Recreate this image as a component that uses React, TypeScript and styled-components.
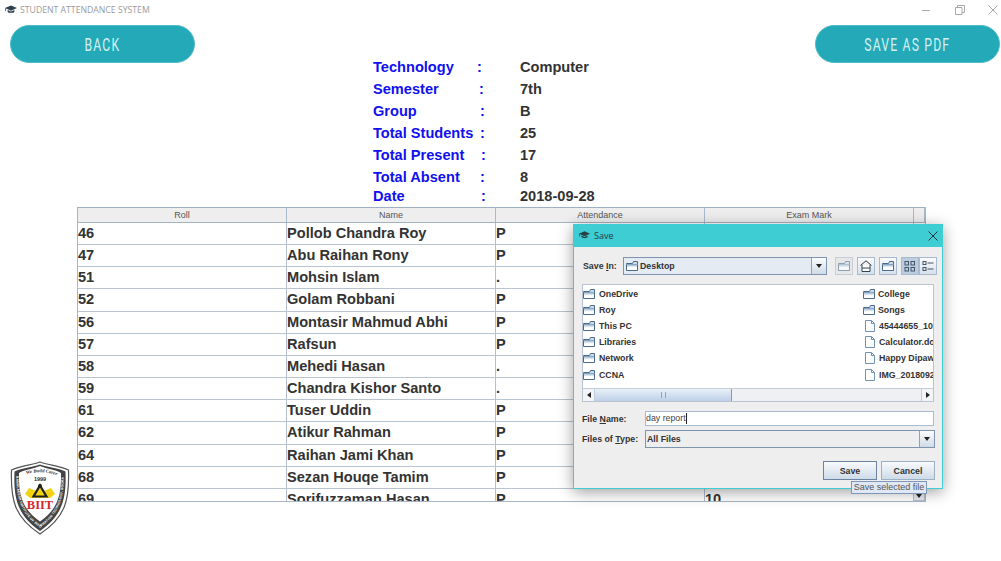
import React from "react";
import styled, { createGlobalStyle } from "styled-components";

const Global = createGlobalStyle`
  html, body { margin: 0; padding: 0; background: #fff; overflow: hidden; }
  body { width: 1001px; height: 561px; font-family: "Liberation Sans", Arial, sans-serif; }
`;

const Page = styled.div`
  position: relative;
  width: 1001px;
  height: 561px;
  overflow: hidden;
  background: #fff;
`;

const TitleBar = styled.header`
  height: 19px;
  display: flex;
  align-items: center;
  padding-left: 5px;
  gap: 3px;
`;
const TitleText = styled.span`
  font: 400 8.7px "Open Sans", sans-serif;
  color: #9a9a9e;
  flex: 1;
`;
const WinGroup = styled.div`
  display: flex;
  gap: 17.5px;
  color: #a8a8a8;
`;
const WinButton = styled.span`
  width: 16px;
  height: 19px;
  display: flex;
  align-items: center;
  justify-content: center;
`;

const TopSection = styled.div`
  height: 182px;
  display: flex;
  align-items: flex-start;
  padding: 6px 1px 0 10px;
`;
const PillButton = styled.button`
  width: 185px;
  height: 38px;
  flex: none;
  border: 1px solid #4fbdc8;
  border-radius: 19px;
  background: #23a9b7;
  color: #d5f0f2;
  font: 400 18px "Roboto", sans-serif;
  letter-spacing: 1.7px;
  padding: 0;
  white-space: nowrap;
`;
const PillLabel = styled.span`
  display: inline-block;
  transform: scaleX(0.68);
`;

const InfoGrid = styled.div`
  flex: 1;
  padding: 31px 0 0 178px;
`;
const InfoRow = styled.div<{ $h: number }>`
  display: grid;
  grid-template-columns: 104px 43px auto;
  height: ${(p) => p.$h}px;
  align-items: center;
  font: 700 14.6px "Liberation Sans", sans-serif;
`;
const InfoLabel = styled.span`
  color: #1010f0;
`;
const InfoColon = styled.span<{ $shift: number }>`
  color: #1010f0;
  padding-left: ${(p) => p.$shift}px;
`;
const InfoValue = styled.span`
  color: #333;
`;

const TableSection = styled.div`
  display: flex;
  height: 328px;
`;
const Gutter = styled.div`
  width: 77px;
  flex: none;
  display: flex;
  align-items: flex-end;
  padding-left: 10px;
  box-sizing: border-box;
`;
const Table = styled.div`
  width: 849px;
  height: 295px;
  box-sizing: border-box;
  border: 1px solid #a9b5c4;
  border-top: 1px solid #9fb0c3;
  overflow: hidden;
  position: relative;
`;
const HeadRow = styled.div`
  display: grid;
  grid-template-columns: 209px 209px 209px 209px 1fr;
  height: 14px;
  background: #eeeeee;
  border-bottom: 1px solid #a3b3c5;
`;
const HeadCell = styled.div`
  font: 400 9px/14px "Liberation Sans", sans-serif;
  color: #555;
  text-align: center;
  border-right: 1px solid #a9bace;
`;
const BodyRow = styled.div`
  display: grid;
  grid-template-columns: 209px 209px 209px 209px 1fr;
  height: 22.17px;
  box-sizing: border-box;
  border-bottom: 1px solid #b9c4d1;
`;
const Cell = styled.div`
  font: 700 14.6px/20px "Liberation Sans", sans-serif;
  color: #333;
  border-right: 1px solid #b3bfce;
  white-space: nowrap;
`;
const ScrollArrow = styled.div`
  position: absolute;
  right: 0;
  bottom: 0;
  width: 12px;
  height: 11px;
  background: #e6e9ee;
  border: 1px solid #b3bfce;
  box-sizing: border-box;
  display: flex;
  align-items: center;
  justify-content: center;
`;
const DownTriangle = styled.span`
  width: 0;
  height: 0;
  border-left: 3.5px solid transparent;
  border-right: 3.5px solid transparent;
  border-top: 4px solid #222;
`;

/* dialog window */
const Dialog = styled.section`
  position: absolute;
  left: 573px;
  top: 224px;
  width: 370px;
  height: 265px;
  box-sizing: border-box;
  background: #eeeeee;
  border: 1px solid #3ecdd3;
  border-top: none;
  box-shadow: 0 3px 14px rgba(0, 0, 0, 0.38);
  display: flex;
  flex-direction: column;
  font: 700 8.8px "Liberation Sans", sans-serif;
  color: #333;
`;
const DialogHead = styled.div`
  height: 23px;
  background: #3ecdd3;
  display: flex;
  align-items: center;
  gap: 4px;
  padding: 0 5px 0 6px;
  margin: 0 -1px;
  flex: none;
`;
const DialogTitle = styled.span`
  font: 400 9px "Open Sans", sans-serif;
  color: #263c44;
  flex: 1;
`;
const SaveInRow = styled.div`
  display: flex;
  align-items: center;
  height: 18px;
  margin-top: 10px;
  padding: 0 7px 0 9px;
`;
const RowLabel = styled.label<{ $w: number }>`
  width: ${(p) => p.$w}px;
  flex: none;
`;
const Combo = styled.div<{ $w: number; $flat?: boolean }>`
  width: ${(p) => p.$w}px;
  height: 18px;
  box-sizing: border-box;
  display: flex;
  align-items: center;
  gap: 2px;
  padding-left: ${(p) => (p.$flat ? 1 : 2)}px;
  border: 1px solid #7d93ae;
  background: ${(p) => (p.$flat ? "#eeeeee" : "#e4ebf3")};
  flex: none;
`;
const ComboText = styled.span`
  flex: 1;
`;
const ComboArrow = styled.span`
  width: 14px;
  height: 16px;
  border-left: 1px solid #8ea2ba;
  background: linear-gradient(#fbfcfd, #cfdbe8);
  display: flex;
  align-items: center;
  justify-content: center;
  flex: none;
`;
const ToolGroup = styled.div`
  display: flex;
  margin-left: 8px;
  gap: 4px;
`;
const ToolPair = styled.div`
  display: flex;
`;
const ToolButton = styled.span<{ $active?: boolean; $off?: boolean }>`
  width: 18px;
  height: 18px;
  box-sizing: border-box;
  border: 1px solid #a9bacd;
  background: ${(p) => (p.$active ? "#bccde2" : p.$off ? "#e3e3e3" : "linear-gradient(#fbfcfd,#d5e0ec)")};
  opacity: ${(p) => (p.$off ? 0.6 : 1)};
  display: flex;
  align-items: center;
  justify-content: center;
`;
const ListBox = styled.div`
  margin: 9px 8px 0 8px;
  height: 118px;
  box-sizing: border-box;
  border: 1px solid #b8c4d2;
  background: #fff;
  display: flex;
  flex-direction: column;
  overflow: hidden;
`;
const ListColumns = styled.div`
  flex: 1;
  display: grid;
  grid-template-columns: 280px 1fr;
  padding-top: 0.5px;
`;
const ListColumn = styled.div`
  display: flex;
  flex-direction: column;
  overflow: hidden;
`;
const ListItem = styled.div`
  height: 16.2px;
  display: flex;
  align-items: center;
  gap: 3px;
  white-space: nowrap;
  overflow: hidden;
`;
const LeftItem = styled(ListItem)`
  gap: 4px;
`;
const HScroll = styled.div`
  height: 12px;
  flex: none;
  display: flex;
  background: #eef0f3;
  border-top: 1px solid #c4ceda;
`;
const ScrollEnd = styled.span`
  width: 11px;
  background: #f2f4f7;
  border-right: 1px solid #c4ceda;
  display: flex;
  align-items: center;
  justify-content: center;
  flex: none;
  &:last-child { border-right: none; border-left: 1px solid #c4ceda; margin-left: auto; }
`;
const Thumb = styled.span`
  width: 136px;
  background: linear-gradient(#e9f0f8, #bdd0e8);
  border-right: 1px solid #7c9cc6;
  display: flex;
  align-items: center;
  justify-content: center;
`;
const Grip = styled.span`
  width: 3px;
  height: 6px;
  border-left: 1px solid #8ca6c6;
  border-right: 1px solid #8ca6c6;
`;
const ArrowL = styled.span<{ $right?: boolean }>`
  width: 0;
  height: 0;
  border-top: 3px solid transparent;
  border-bottom: 3px solid transparent;
  ${(p) => (p.$right ? "border-left: 4px solid #222;" : "border-right: 4px solid #222;")}
`;
const FieldRow = styled.div<{ $top: number }>`
  display: flex;
  align-items: center;
  margin-top: ${(p) => p.$top}px;
  padding: 0 8px 0 8px;
`;
const FileInput = styled.div`
  flex: 1;
  height: 15px;
  box-sizing: border-box;
  border: 1px solid #a8bbd0;
  background: #fff;
  font: 400 8.8px/13px "Liberation Sans", sans-serif;
  color: #444;
  padding-left: 0;
  display: flex;
  align-items: center;
`;
const Caret = styled.span`
  width: 1px;
  height: 11px;
  background: #222;
`;
const Footer = styled.div`
  display: flex;
  justify-content: flex-end;
  gap: 4px;
  margin-top: 13px;
  padding-right: 7px;
`;
const DialogButton = styled.button<{ $primary?: boolean }>`
  width: 54px;
  height: 19px;
  padding: 0;
  border: 1px solid ${(p) => (p.$primary ? "#6c84a2" : "#9db0c6")};
  background: linear-gradient(#f8fafc, #cfdbe9);
  font: 700 8.8px "Liberation Sans", sans-serif;
  color: #333;
`;
const Tooltip = styled.div`
  position: absolute;
  left: 277px;
  top: 257px;
  width: 76px;
  height: 13px;
  box-sizing: border-box;
  background: #dfe8f4;
  border: 1px solid #7e97b8;
  font: 400 9px/11px "Liberation Sans", sans-serif;
  color: #555;
  text-align: center;
  white-space: nowrap;
`;

const Cap = ({ c = "#2f4050", s = 12 }: { c?: string; s?: number }) => (
  <svg width={s} height={s * 0.75} viewBox="0 0 16 12">
    <path d="M8 0.5 16 4 8 7.5 0 4Z" fill={c} />
    <path d="M3.5 6.6v2.6C5 10.8 11 10.8 12.5 9.2V6.6L8 8.6Z" fill={c} />
    <path d="M0.8 4.2v4" stroke={c} strokeWidth="1" />
  </svg>
);

const Folder = () => (
  <svg width="12" height="10" viewBox="0 0 12 10" style={{ flex: "none" }}>
    <path d="M0.5 3.5h11v6h-11z" fill="#fff" stroke="#4a6a8c" />
    <path d="M0.500 3.500V2.500H6.500L7.500 .5h4v3" fill="#cddcec" stroke="#4a6a8c" />
    <path d="M1 4h10v1.500H1z" fill="#b4cbe4" />
  </svg>
);
const FileIcon = () => (
  <svg width="12" height="12" viewBox="0 0 12 12" style={{ flex: "none", marginLeft: 1 }}>
    <path d="M1.500 .5h6l3 3v8h-9z" fill="#fff" stroke="#6f92b8" />
    <path d="M7.500 .5v3h3" fill="none" stroke="#6f92b8" />
  </svg>
);
const HomeIcon = () => (
  <svg width="12" height="12" viewBox="0 0 12 12">
    <path d="M0.500 5.500 6 .8l5.500 4.700" fill="none" stroke="#333" />
    <path d="M2 5v6.500h8V5" fill="#fff" stroke="#345" />
    <path d="M2 8h8" stroke="#345" />
  </svg>
);
const DetailsIcon = ({ list }: { list?: boolean }) =>
  list ? (
    <svg width="12" height="12" viewBox="0 0 12 12">
      <rect x="1" y="1.500" width="3" height="3" fill="none" stroke="#456" />
      <rect x="1" y="7.500" width="3" height="3" fill="none" stroke="#456" />
      <path d="M5.500 3h6M5.500 9h6" stroke="#456" />
    </svg>
  ) : (
    <svg width="12" height="12" viewBox="0 0 12 12">
      <rect x="1" y="1.500" width="3.500" height="3.500" fill="none" stroke="#456" />
      <rect x="7" y="1.500" width="3.500" height="3.500" fill="none" stroke="#456" />
      <rect x="1" y="7.500" width="3.500" height="3.500" fill="none" stroke="#456" />
      <rect x="7" y="7.500" width="3.500" height="3.500" fill="none" stroke="#456" />
    </svg>
  );

const Logo = () => (
  <svg width="60" height="74" viewBox="0 0 60 74">
    <defs>
      <path id="ringText" d="M6.200 15 C6.500 36 10 53 30 66.500 C50 53 53.500 36 53.800 15" fill="none" />
      <path id="topText" d="M13 14.500 Q30 8 47 14.500" fill="none" />
    </defs>
    <path d="M30 1C38 4 50 5 58.500 9C59.500 38 56 56 30 73C4 56 .5 38 1.500 9C10 5 22 4 30 1Z" fill="#fff" stroke="#555" strokeWidth="1.200" />
    <path d="M30 3.500C38 6.500 48 7 55.500 10.500C56.500 37 53 54 30 70C7 54 3.500 37 4.500 10.500C12 7 22 6.500 30 3.500Z" fill="#444" />
    <path d="M30 5C37 8 47 9 51 12C51.500 34 48 48 30 60.500C12 48 8.500 34 9 12C13 9 23 8 30 5Z" fill="#fff" />
    <text fontSize="4.800" fontFamily="Liberation Serif, serif" fontStyle="italic" fill="#333" fontWeight="700">
      <textPath href="#topText" startOffset="10%">We Build Career</textPath>
    </text>
    <text fontSize="3.300" fontFamily="Liberation Sans, sans-serif" fill="#fff" fontWeight="700" textLength="118">
      <textPath href="#ringText">BANGLADESH INSTITUTE OF INFORMATION TECHNOLOGY, BOGRA</textPath>
    </text>
    <text x="30" y="20" fontSize="5.500" textAnchor="middle" fontFamily="Liberation Sans, sans-serif" fill="#333" fontWeight="700">1999</text>
    <path d="M19 27 L26 30 L30 22 L34 30 L41 27 L45 33 L40 37 L20 37 L15 33Z" fill="#f2d211" />
    <path d="M30 24.500 36.500 35.500 H23.500Z" fill="#f2d211" stroke="#222" strokeWidth="2.200" />
    <circle cx="30" cy="25" r="2" fill="#222" />
    <text x="30" y="47.500" fontSize="12.500" textAnchor="middle" fontFamily="Liberation Serif, serif" fill="#d5272a" fontWeight="700">BIIT</text>
  </svg>
);

const info = [
  { l: "Technology", v: "Computer", h: 22, cx: 0 },
  { l: "Semester", v: "7th", h: 22, cx: 2 },
  { l: "Group", v: "B", h: 22, cx: 3 },
  { l: "Total Students", v: "25", h: 22, cx: 3 },
  { l: "Total Present", v: "17", h: 22, cx: 4 },
  { l: "Total Absent", v: "8", h: 22, cx: 3 },
  { l: "Date", v: "2018-09-28", h: 16, cx: 4 },
];
const students: [string, string, string, string][] = [
  ["46", "Pollob Chandra Roy", "P", ""],
  ["47", "Abu Raihan Rony", "P", ""],
  ["51", "Mohsin Islam", ".", ""],
  ["52", "Golam Robbani", "P", ""],
  ["56", "Montasir Mahmud Abhi", "P", ""],
  ["57", "Rafsun", "P", ""],
  ["58", "Mehedi Hasan", ".", ""],
  ["59", "Chandra Kishor Santo", ".", ""],
  ["61", "Tuser Uddin", "P", ""],
  ["62", "Atikur Rahman", "P", ""],
  ["64", "Raihan Jami Khan", "P", ""],
  ["68", "Sezan Houqe Tamim", "P", ""],
  ["69", "Sorifuzzaman Hasan", "P", "10"],
];
const leftItems = ["OneDrive", "Roy", "This PC", "Libraries", "Network", "CCNA"];
const rightItems: [string, boolean][] = [
  ["College", true],
  ["Songs", true],
  ["45444655_10", false],
  ["Calculator.doc", false],
  ["Happy Dipawali", false],
  ["IMG_20180928", false],
];

export default function App() {
  return (
    <Page>
      <Global />
      <TitleBar>
        <Cap />
        <TitleText>STUDENT ATTENDANCE SYSTEM</TitleText>
        <WinGroup>
          <WinButton>
            <svg width="10" height="10" viewBox="0 0 10 10"><path d="M1 5.500h8" stroke="currentColor" /></svg>
          </WinButton>
          <WinButton>
            <svg width="10" height="10" viewBox="0 0 10 10"><path d="M.5 2.500h6.500v7H.5zM2.500 2.500V.5h7v7H7" fill="none" stroke="currentColor" /></svg>
          </WinButton>
          <WinButton>
            <svg width="10" height="10" viewBox="0 0 10 10"><path d="M.5.5l9 9M9.500.5l-9 9" stroke="currentColor" /></svg>
          </WinButton>
        </WinGroup>
      </TitleBar>
      <TopSection>
        <PillButton><PillLabel>BACK</PillLabel></PillButton>
        <InfoGrid>
          {info.map((r) => (
            <InfoRow key={r.l} $h={r.h}>
              <InfoLabel>{r.l}</InfoLabel>
              <InfoColon $shift={r.cx}>:</InfoColon>
              <InfoValue>{r.v}</InfoValue>
            </InfoRow>
          ))}
        </InfoGrid>
        <PillButton><PillLabel>SAVE AS PDF</PillLabel></PillButton>
      </TopSection>
      <TableSection>
        <Gutter>
          <Logo />
        </Gutter>
        <Table>
          <HeadRow>
            {["Roll", "Name", "Attendance", "Exam Mark"].map((h) => (
              <HeadCell key={h}>{h}</HeadCell>
            ))}
            <HeadCell />
          </HeadRow>
          {students.map((s) => (
            <BodyRow key={s[0]}>
              {s.map((c, i) => (
                <Cell key={i}>{c}</Cell>
              ))}
            </BodyRow>
          ))}
          <ScrollArrow><DownTriangle /></ScrollArrow>
        </Table>
      </TableSection>

      <Dialog>
        <DialogHead>
          <Cap c="#2c3e46" s={11} />
          <DialogTitle>Save</DialogTitle>
          <svg width="10" height="10" viewBox="0 0 10 10"><path d="M.5.5l9 9M9.500.5l-9 9" stroke="#24323a" /></svg>
        </DialogHead>
        <SaveInRow>
          <RowLabel $w={40}>Save <u>I</u>n:</RowLabel>
          <Combo $w={204}>
            <Folder />
            <ComboText>Desktop</ComboText>
            <ComboArrow><DownTriangle /></ComboArrow>
          </Combo>
          <ToolGroup>
            <ToolButton $off><Folder /></ToolButton>
            <ToolButton><HomeIcon /></ToolButton>
            <ToolButton><Folder /></ToolButton>
            <ToolPair>
              <ToolButton $active><DetailsIcon /></ToolButton>
              <ToolButton><DetailsIcon list /></ToolButton>
            </ToolPair>
          </ToolGroup>
        </SaveInRow>
        <ListBox>
          <ListColumns>
            <ListColumn>
              {leftItems.map((t) => (
                <LeftItem key={t}><Folder />{t}</LeftItem>
              ))}
            </ListColumn>
            <ListColumn>
              {rightItems.map(([t, f]) => (
                <ListItem key={t}>{f ? <Folder /> : <FileIcon />}{t}</ListItem>
              ))}
            </ListColumn>
          </ListColumns>
          <HScroll>
            <ScrollEnd><ArrowL /></ScrollEnd>
            <Thumb><Grip /></Thumb>
            <ScrollEnd><ArrowL $right /></ScrollEnd>
          </HScroll>
        </ListBox>
        <FieldRow $top={9}>
          <RowLabel $w={63}>File <u>N</u>ame:</RowLabel>
          <FileInput>day report<Caret /></FileInput>
        </FieldRow>
        <FieldRow $top={4}>
          <RowLabel $w={63}>Files of <u>T</u>ype:</RowLabel>
          <Combo $w={290} $flat>
            <ComboText>All Files</ComboText>
            <ComboArrow><DownTriangle /></ComboArrow>
          </Combo>
        </FieldRow>
        <Footer>
          <DialogButton $primary>Save</DialogButton>
          <DialogButton>Cancel</DialogButton>
        </Footer>
        <Tooltip>Save selected file</Tooltip>
      </Dialog>
    </Page>
  );
}
